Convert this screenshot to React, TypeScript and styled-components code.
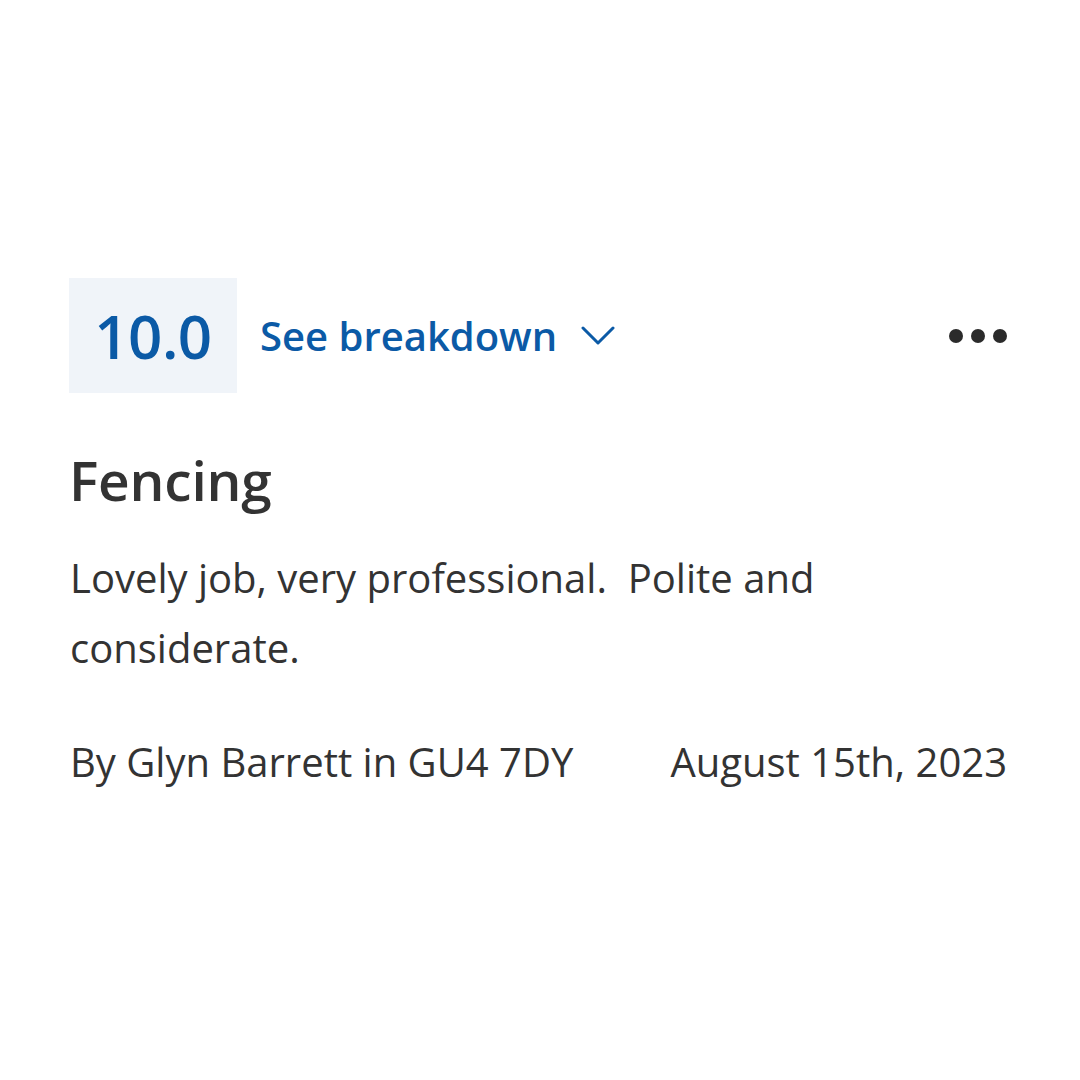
import React from "react";
import styled, { createGlobalStyle } from "styled-components";

const Global = createGlobalStyle`
  html, body { margin: 0; padding: 0; background: #ffffff; }
  body { font-family: "Open Sans", "Noto Sans", sans-serif; }
`;

const Page = styled.div`
  width: 1080px;
  height: 1080px;
  box-sizing: border-box;
  padding: 278px 73px 0 69px;
  display: flex;
  flex-direction: column;
`;

const TopRow = styled.div`
  display: flex;
  align-items: center;
  height: 115px;
`;

const ScoreBox = styled.div`
  width: 168px;
  height: 115px;
  background: #f0f4f9;
  display: flex;
  align-items: center;
  justify-content: center;
  color: #0b5aa6;
  font-size: 60px;
  font-weight: 600;
  letter-spacing: -0.5px;
`;

const Breakdown = styled.button`
  margin-left: 23px;
  display: flex;
  align-items: center;
  gap: 24px;
  background: none;
  border: none;
  padding: 0;
  color: #0b5aa6;
  font-family: "Open Sans", sans-serif;
  font-size: 40px;
  font-weight: 600;
  cursor: pointer;
`;

const MoreButton = styled.button`
  margin-left: auto;
  display: flex;
  gap: 8px;
  background: none;
  border: none;
  padding: 0;
`;

const Dot = styled.span`
  width: 14px;
  height: 14px;
  border-radius: 50%;
  background: #2b2b2b;
`;

const Title = styled.h2`
  margin: 52px 0 0 0;
  font-size: 55px;
  font-weight: 600;
  color: #333333;
  letter-spacing: -0.2px;
  line-height: 70px;
`;

const Body = styled.p`
  margin: 28px 0 0 1px;
  width: 800px;
  font-size: 40px;
  line-height: 70px;
  color: #333333;
  white-space: pre-wrap;
`;

const Footer = styled.div`
  margin-top: 44px;
  display: flex;
  justify-content: space-between;
  font-size: 40px;
  line-height: 70px;
  color: #333333;
  padding-left: 1px;
`;

export default function App() {
  return (
    <>
      <Global />
      <Page>
        <TopRow>
          <ScoreBox>10.0</ScoreBox>
          <Breakdown>
            See breakdown
            <svg width="34" height="22" viewBox="0 0 34 22" fill="none">
              <path d="M2 3 L17 18 L32 3" stroke="#0b5aa6" strokeWidth="3" strokeLinecap="round" strokeLinejoin="round" />
            </svg>
          </Breakdown>
          <MoreButton aria-label="More">
            <Dot />
            <Dot />
            <Dot />
          </MoreButton>
        </TopRow>
        <Title>Fencing</Title>
        <Body>{"Lovely job, very professional.  Polite and considerate."}</Body>
        <Footer>
          <span>By Glyn Barrett in GU4 7DY</span>
          <span>August 15th, 2023</span>
        </Footer>
      </Page>
    </>
  );
}
